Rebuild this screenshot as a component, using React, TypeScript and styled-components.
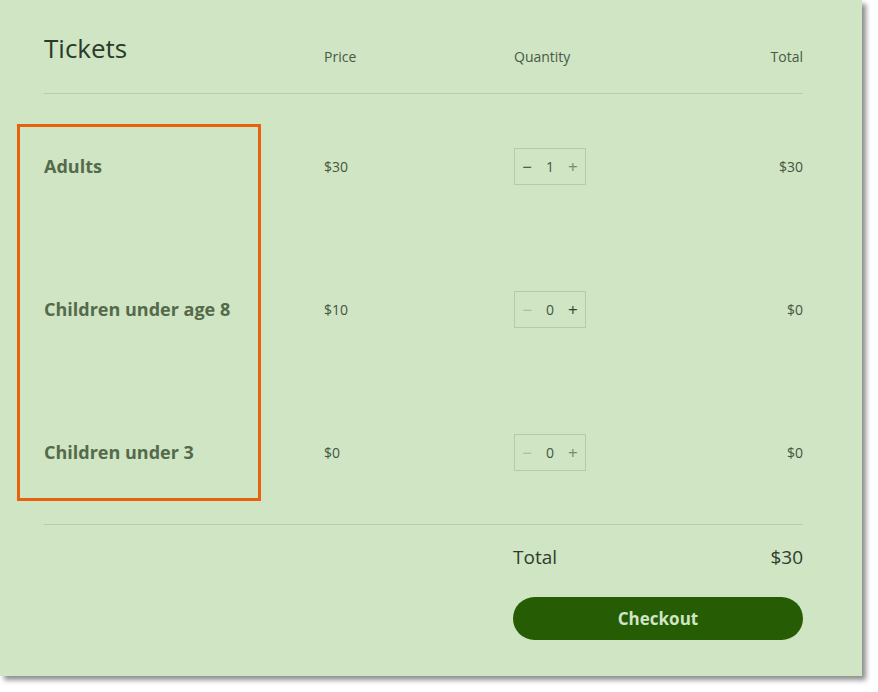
import React from "react";
import styled, { createGlobalStyle } from "styled-components";

const GlobalStyle = createGlobalStyle`
  html, body {
    margin: 0;
    padding: 0;
    background: #ffffff;
  }
  body {
    font-family: "Open Sans", "Liberation Sans", sans-serif;
  }
`;

const LINE = "#b6cfab";

const Page = styled.div`
  width: 878px;
  height: 692px;
  background: #ffffff;
`;

const Panel = styled.div`
  position: relative;
  width: 862px;
  height: 676px;
  box-sizing: border-box;
  background: #cfe5c4;
  padding: 0 59px 0 44px;
  box-shadow: 4px 4px 5px rgba(0, 0, 0, 0.45);
`;

const Grid = styled.div`
  display: grid;
  grid-template-columns: 280px 190px 1fr;
`;

const HeadRow = styled(Grid)`
  height: 94px;
  border-bottom: 1px solid ${LINE};
  box-sizing: border-box;
  align-items: start;
`;

const Title = styled.h1`
  margin: 0;
  padding-top: 30px;
  font-size: 26px;
  font-weight: 400;
  line-height: 36px;
  color: #2c3a28;
`;

const HeadLabel = styled.div<{ right?: boolean }>`
  padding-top: 47px;
  font-size: 14px;
  line-height: 20px;
  color: #4a5945;
  text-align: ${p => (p.right ? "right" : "left")};
`;

const HeadSplit = styled.div`
  display: flex;
  justify-content: space-between;
`;

const QtyCell = styled.div`
  display: flex;
  align-items: center;
  justify-content: space-between;
`;

const Body = styled.div`
  padding-top: 1px;
  border-bottom: 1px solid ${LINE};
`;

const Row = styled(Grid)`
  height: 143px;
  align-items: center;
`;

const Name = styled.div`
  font-size: 18px;
  font-weight: 700;
  line-height: 24px;
  padding-bottom: 2px;
  color: #546a4a;
`;

const Cell = styled.div<{ right?: boolean }>`
  font-size: 14px;
  color: #46553f;
  text-align: ${p => (p.right ? "right" : "left")};
`;

const Stepper = styled.div`
  display: flex;
  align-items: center;
  justify-content: space-between;
  width: 72px;
  height: 37px;
  box-sizing: border-box;
  border: 1px solid #b3cba8;
  padding: 0 5px 0 5px;
  color: #46553f;
  font-size: 14px;
`;

const StepBtn = styled.span<{ tone: "dark" | "mid" | "faint" }>`
  width: 14px;
  text-align: center;
  font-size: 17px;
  line-height: 20px;
  color: ${p =>
    p.tone === "dark" ? "#33432d" : p.tone === "mid" ? "#768b6c" : "#a3b899"};
`;

const Footer = styled.div`
  display: flex;
  flex-direction: column;
  align-items: flex-end;
  padding-top: 18px;
`;

const TotalLine = styled.div`
  width: 290px;
  display: flex;
  justify-content: space-between;
  font-size: 19px;
  line-height: 28px;
  color: #2f3c2b;
`;

const Checkout = styled.button`
  margin-top: 26px;
  width: 290px;
  height: 43px;
  border: none;
  border-radius: 22px;
  background: #265c04;
  color: #cfe5c4;
  font-family: "Open Sans", "Liberation Sans", sans-serif;
  font-size: 17px;
  font-weight: 700;
  cursor: pointer;
`;

const Highlight = styled.div`
  position: absolute;
  left: 17px;
  top: 124px;
  width: 244px;
  height: 377px;
  box-sizing: border-box;
  border: 3px solid #e8610e;
  pointer-events: none;
`;

type Ticket = {
  name: string;
  price: number;
  qty: number;
  plusTone: "dark" | "mid";
};

const tickets: Ticket[] = [
  { name: "Adults", price: 30, qty: 1, plusTone: "mid" },
  { name: "Children under age 8", price: 10, qty: 0, plusTone: "dark" },
  { name: "Children under 3", price: 0, qty: 0, plusTone: "mid" },
];

const App = () => {
  const total = tickets.reduce((sum, t) => sum + t.price * t.qty, 0);
  return (
    <Page>
      <GlobalStyle />
      <Panel>
        <HeadRow>
          <Title>Tickets</Title>
          <HeadLabel>Price</HeadLabel>
          <HeadSplit>
            <HeadLabel>Quantity</HeadLabel>
            <HeadLabel right>Total</HeadLabel>
          </HeadSplit>
        </HeadRow>
        <Body>
          {tickets.map(t => (
            <Row key={t.name}>
              <Name>{t.name}</Name>
              <Cell>${t.price}</Cell>
              <QtyCell>
                <Stepper>
                  <StepBtn tone={t.qty > 0 ? "dark" : "faint"}>−</StepBtn>
                  <span>{t.qty}</span>
                  <StepBtn tone={t.plusTone}>+</StepBtn>
                </Stepper>
                <Cell right>${t.price * t.qty}</Cell>
              </QtyCell>
            </Row>
          ))}
        </Body>
        <Footer>
          <TotalLine>
            <span>Total</span>
            <span>${total}</span>
          </TotalLine>
          <Checkout>Checkout</Checkout>
        </Footer>
        <Highlight />
      </Panel>
    </Page>
  );
};

export default App;
